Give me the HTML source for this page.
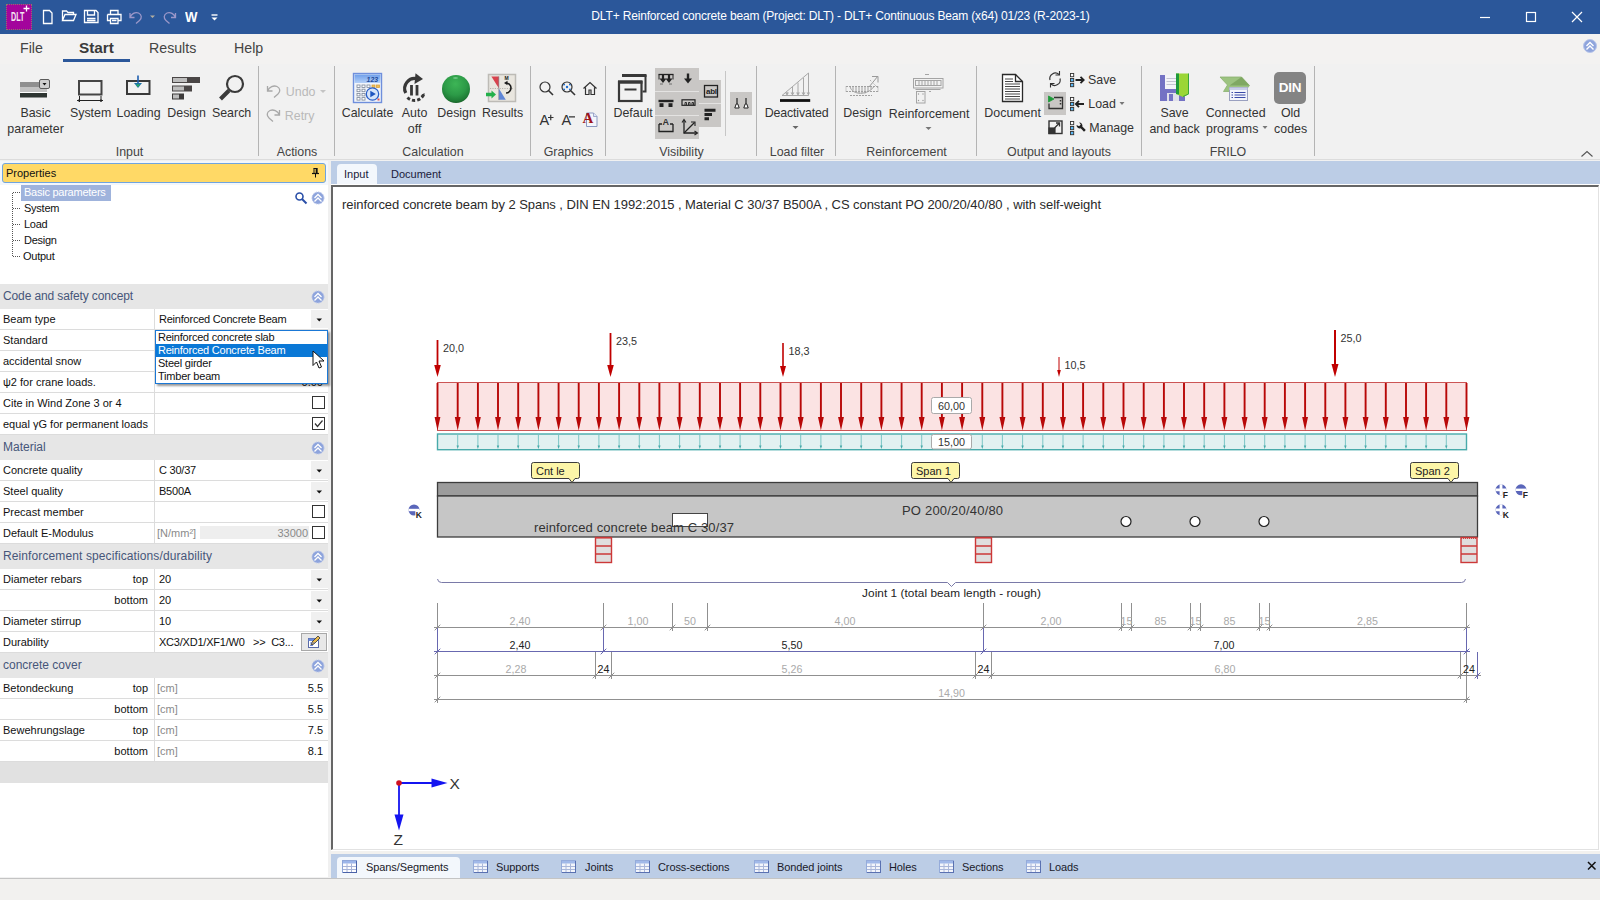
<!DOCTYPE html>
<html><head><meta charset="utf-8"><title>DLT+ Reinforced concrete beam</title>
<style>
*{box-sizing:border-box;margin:0;padding:0}
html,body{width:1600px;height:900px;overflow:hidden;background:#f1f1f1;font-family:"Liberation Sans",sans-serif;font-size:12px;color:#1a1a1a}
.abs{position:absolute}
#title{position:absolute;left:0;top:0;width:1600px;height:34px;background:#2b579a;color:#fff}
#title .cap{position:absolute;left:0;width:1681px;top:9px;text-align:center;font-size:12px;letter-spacing:-0.170px}
#menu{position:absolute;left:0;top:34px;width:1600px;height:30px;background:#f3f2f1}
#menu span{position:absolute;top:6px;font-size:14.200px;color:#444;white-space:nowrap}
#ribbon{position:absolute;left:0;top:64px;width:1600px;height:96px;background:#f1f1f1;border-bottom:1px solid #dcdcdc}
.rl{position:absolute;font-size:12.400px;color:#333;text-align:center;white-space:nowrap;line-height:16px;transform:translateX(calc(-50% + 0.6px))}
.gl{position:absolute;top:81px;font-size:12.400px;color:#444;white-space:nowrap;transform:translateX(-50%)}
.sep{position:absolute;top:2px;width:1px;height:90px;background:#b4b4b4}
.dis{color:#b9b9b9}
svg{position:absolute;overflow:visible}
</style></head><body>
<div id="title">
 <div class="abs" style="left:6px;top:4px;width:26px;height:26px;background:#a3059c;border:1px dotted #8a7a6a"></div>
 <div class="abs" style="left:10.800px;top:11.500px;font-size:9px;font-weight:bold;color:#f4e6f2;transform:scale(.8,1.45);transform-origin:0 50%">DLT</div>
 <svg width="10" height="10" style="left:22px;top:3px" stroke="#fff" stroke-width="1.300"><path d="M1.500 5.500h6M4.500 2.500v6"/></svg>
 <svg width="230" height="34" style="left:0;top:0" fill="none" stroke="#fff" stroke-width="1.3">
  <path d="M43.5 10.5h6l2.5 2.5v10.500h-8.500z"/>
  <path d="M62.500 20.500v-9.500h4l1.500 1.500h5.500v2.500M62.500 20.500l2.500-6h11l-2.500 6z"/>
  <path d="M84.500 10.500h11.500l2 2v10h-13.500zM87.500 10.500v4.500h7v-4.500M87 18.500h8.500M87 20.500h8.500"/>
  <path d="M110.500 14.500v-4h7.500v4M107.500 14.500h13.500v6h-2.500M110 20.500h-2.500v-6M110.500 18.500h7.500v5h-7.500zM112 20.500h4.500"/>
  <path d="M130 13v4.500h4.500M130 17.500c1.500-3.500 5-6 8.500-4.500c3.500 1.500 3.500 5.500 1 7.500l-3.500 3" stroke="#9b97c9"/>
  <path d="M175.500 13v4.500h-4.500M175.500 17.500c-1.500-3.500-5-6-8.500-4.500c-3.500 1.500-3.500 5.500-1 7.500l3.500 3" stroke="#9b97c9"/>
  <path d="M150 15.500h5l-2.500 2.500z" fill="#b5b0a0" stroke="none"/>
  <path d="M211.500 15h6" stroke-width="1.400"/><path d="M211.500 17.500h6l-3 3z" fill="#fff" stroke="none"/>
 </svg>
 <div class="abs" style="left:185px;top:8px;font-size:15px;font-weight:bold;color:#fff;transform:scaleX(.88);transform-origin:0 0">W</div>
 <div class="cap">DLT+ Reinforced concrete beam (Project: DLT) - DLT+ Continuous Beam (x64) 01/23 (R-2023-1)</div>
 <svg width="140" height="34" style="left:1460px;top:0" fill="none" stroke="#fff" stroke-width="1.200">
  <path d="M20 17.500h10"/><rect x="66.500" y="12.500" width="9" height="9"/><path d="M112 12l10 10M122 12l-10 10"/>
 </svg>
</div>

<div id="menu">
 <span style="left:20px">File</span>
 <span style="left:79px;font-weight:bold;color:#3a3a3a;font-size:15.300px;top:5px">Start</span>
 <span style="left:149px">Results</span>
 <span style="left:234px">Help</span>
 <div class="abs" style="left:63px;top:25px;width:67px;height:3px;background:#2b579a"></div>
 <svg width="16" height="16" style="left:1582px;top:4px"><circle cx="8" cy="8" r="6.500" fill="#8ea4dc" stroke="#b9c6ea" stroke-width="1"/><path d="M4.500 8l3.500-3.500l3.500 3.500M4.500 11.500l3.500-3.500l3.500 3.500" fill="none" stroke="#fff" stroke-width="1.400"/></svg>
</div>

<div id="ribbon">
<!-- separators -->
<div class="sep" style="left:258px"></div><div class="sep" style="left:334px"></div><div class="sep" style="left:530px"></div><div class="sep" style="left:605px"></div><div class="sep" style="left:756px"></div><div class="sep" style="left:835px"></div><div class="sep" style="left:976px"></div><div class="sep" style="left:1141px"></div><div class="sep" style="left:1314px"></div>
<!-- group labels -->
<div class="gl" style="left:129.500px">Input</div><div class="gl" style="left:297px">Actions</div><div class="gl" style="left:433px">Calculation</div><div class="gl" style="left:568.500px">Graphics</div><div class="gl" style="left:681.500px">Visibility</div><div class="gl" style="left:797px">Load filter</div><div class="gl" style="left:906.500px">Reinforcement</div><div class="gl" style="left:1059px">Output and layouts</div><div class="gl" style="left:1228px">FRILO</div>
<!-- big labels -->
<div class="rl" style="left:35px;top:41px">Basic<br>parameter</div>
<div class="rl" style="left:90px;top:41px">System</div>
<div class="rl" style="left:138px;top:41px">Loading</div>
<div class="rl" style="left:186px;top:41px">Design</div>
<div class="rl" style="left:231px;top:41px">Search</div>
<div class="rl dis" style="left:300px;top:20px">Undo</div>
<div class="rl dis" style="left:299px;top:44px">Retry</div>
<div class="rl" style="left:367px;top:41px">Calculate</div>
<div class="rl" style="left:414px;top:41px">Auto<br>off</div>
<div class="rl" style="left:456px;top:41px">Design</div>
<div class="rl" style="left:502px;top:41px">Results</div>
<div class="rl" style="left:632.500px;top:41px">Default</div>
<div class="rl" style="left:796px;top:41px;letter-spacing:-0.150px">Deactivated</div>
<div class="rl" style="left:862px;top:41px">Design</div>
<div class="rl" style="left:928.500px;top:42px">Reinforcement</div>
<div class="rl" style="left:1012px;top:41px">Document</div>
<div class="rl" style="left:1101.500px;top:8px">Save</div>
<div class="rl" style="left:1101.500px;top:32px">Load</div>
<div class="rl" style="left:1111px;top:56px">Manage</div>
<div class="rl" style="left:1174px;top:41px">Save<br>and back</div>
<div class="rl" style="left:1235px;top:41px">Connected<br>programs&nbsp;&nbsp;</div>
<div class="rl" style="left:1290px;top:41px">Old<br>codes</div>
<!-- Basic parameter -->
<svg width="34" height="22" style="left:18px;top:13px">
 <rect x="2" y="5" width="27" height="5" fill="#8f8f8f"/><rect x="2" y="10" width="27" height="5" fill="#c2c2c2"/><rect x="2" y="15" width="27" height="1" fill="#fff"/><rect x="2" y="16" width="27" height="4.500" fill="#2e3532"/>
 <rect x="21.500" y="2.500" width="10" height="9" rx="1.500" fill="#cfcfcf" stroke="#5a5a5a" stroke-width="1"/><path d="M24.500 6h4l-2 2.500z" fill="#111"/>
</svg>
<!-- System -->
<svg width="30" height="26" style="left:75px;top:14px" fill="none" stroke="#444">
 <rect x="4" y="3" width="22.500" height="13.500" stroke-width="2"/><path d="M2 22.500h26M4.500 18v6M26 18v6" stroke="#222" stroke-width="1"/><path d="M2 22.500l2.500-1.500v3zM28 22.500l-2.500-1.500v3z" fill="#222" stroke="none"/>
</svg>
<!-- Loading -->
<svg width="30" height="24" style="left:123px;top:10px" fill="none">
 <rect x="4" y="7" width="22.500" height="13" stroke="#3a3a3a" stroke-width="2"/><path d="M15 1.500v9" stroke="#1f5fb0" stroke-width="1.600"/><path d="M11 9h8l-4 5z" fill="#1c74a8"/><path d="M13 10.500h4l-2 2.500z" fill="#2fae5a"/>
</svg>
<!-- Design bars -->
<svg width="30" height="24" style="left:171px;top:12px">
 <rect x="1" y="1" width="28" height="6" fill="#4a4646"/><rect x="2" y="2" width="14" height="4" fill="#bdbdbd"/>
 <rect x="1" y="9.500" width="20" height="6" fill="#4a4646"/><rect x="2" y="10.500" width="11" height="4" fill="#bdbdbd"/>
 <rect x="1" y="17.500" width="12" height="6" fill="#3c3a3a"/><rect x="2" y="18.500" width="6" height="4" fill="#bdbdbd"/>
</svg>
<!-- Search -->
<svg width="30" height="28" style="left:217px;top:10px" fill="none" stroke="#3a3a3a">
 <circle cx="18" cy="10" r="8" stroke-width="2.200"/><path d="M12 16.500l-8.500 8.500" stroke-width="4"/>
</svg>
<!-- Undo / Retry -->
<svg width="70" height="46" style="left:262px;top:16px" fill="none" stroke="#a8a8a8" stroke-width="1.300">
 <path d="M5.500 6v5h5M5.500 11c2-4 6-6 9.500-4.500c3.500 1.500 3.500 5.500 1 7.500l-4 3.500"/>
 <path d="M17.500 30v5h-5M17.500 35c-2-4-6-6-9.500-4.500c-3.500 1.500-3.500 5.500-1 7.500l4 3.500"/>
 <path d="M58 10h6l-3 3z" fill="#c4c4c4" stroke="none"/>
</svg>
<!-- Calculate -->
<svg width="32" height="32" style="left:352px;top:8px">
 <defs><linearGradient id="cg" x1="0" y1="0" x2="0" y2="1"><stop offset="0" stop-color="#6f9fea"/><stop offset="1" stop-color="#b4d0f8"/></linearGradient></defs>
 <rect x="1.500" y="1.500" width="28" height="29" fill="#f2f5fb" stroke="#6f8fdc" stroke-width="1.400"/>
 <rect x="2.500" y="2.500" width="26" height="8.500" fill="url(#cg)"/>
 <text x="14.500" y="9.500" font-family="Liberation Sans,sans-serif" font-size="7" font-weight="bold" font-style="italic" fill="#1f4a9a">123</text>
 <g fill="#fff" stroke="#7a8698" stroke-width=".8"><rect x="5" y="13" width="3" height="2.500"/><rect x="10" y="13" width="3" height="2.500"/><rect x="15" y="13" width="3" height="2.500"/><rect x="20" y="13" width="3" height="2.500" fill="#f2c050" stroke="#d8a040"/><rect x="24.500" y="13" width="3" height="2.500" fill="#f2c050" stroke="#d8a040"/><rect x="5" y="17.200" width="3" height="2.500"/><rect x="10" y="17.200" width="3" height="2.500"/><rect x="5" y="21.400" width="3" height="2.500"/><rect x="10" y="21.400" width="3" height="2.500"/><rect x="5" y="25.600" width="3" height="2.500"/><rect x="10" y="25.600" width="3" height="2.500"/></g>
 <circle cx="20.500" cy="22" r="6.200" fill="#d6e4fa" stroke="#2a5fc8" stroke-width="1.300"/><path d="M18.300 18.800v6.400l5.500-3.200z" fill="#1f55c0"/><rect x="25.500" y="26.500" width="2" height="2" fill="#e05050"/>
</svg>
<!-- Auto off -->
<svg width="30" height="34" style="left:400px;top:8px" fill="none" stroke="#383838">
 <path d="M5.800 21a10 10 0 0 1 11.500-14.200" stroke-width="3.200"/><path d="M15.500 1.200l7.500 5.800l-8.500 5z" fill="#383838" stroke="none"/>
 <path d="M7.500 25.500a10 10 0 0 0 16.500-3.500" stroke-width="3" stroke-dasharray="3.200 2"/>
 <path d="M11.500 13v10.500M17 13v10.500" stroke-width="2.800"/><path d="M20.500 23.500l4-2.500v3z" fill="#383838" stroke="none"/>
</svg>
<!-- Design sphere -->
<svg width="32" height="32" style="left:440px;top:9px">
 <defs><radialGradient id="sg" cx=".48" cy=".32" r=".72"><stop offset="0" stop-color="#3db556"/><stop offset=".55" stop-color="#2c9a47"/><stop offset=".85" stop-color="#1e7a35"/><stop offset="1" stop-color="#14521f"/></radialGradient></defs>
 <circle cx="16" cy="16" r="14" fill="url(#sg)"/><ellipse cx="15.500" cy="5" rx="2.500" ry=".8" fill="#9fe0b0" opacity=".7"/>
</svg>
<!-- Results -->
<svg width="32" height="32" style="left:486px;top:8px">
 <rect x="2.500" y="2.500" width="27" height="27" fill="#e9e6df" stroke="#bdbbb6" stroke-width="1.500"/>
 <path d="M5.400 4.500h7.600v12.100z" fill="#d8434e"/><path d="M12.800 16.600v11.200h7z" fill="#5f86d6"/>
 <path d="M12.800 4.500v23.500" stroke="#8a8a90" stroke-width=".7"/>
 <path d="M4 16.500h24" stroke="#a8a6a0" stroke-width=".8" stroke-dasharray="1.200 1.200"/>
 <path d="M0 20.800h5.500v-2.300l4.500 4l-4.500 4v-2.300h-5.500z" fill="#22b04a"/>
 <path d="M20 11a5 5 0 1 1 0 10" fill="none" stroke="#1a1a1a" stroke-width="1.600"/><path d="M18 11l3.500-2.200v4.400z" fill="#1a1a1a"/>
 <text x="18.500" y="8.200" font-family="Liberation Sans,sans-serif" font-size="5" font-weight="bold" fill="#1a1a1a">M</text>
</svg>
<!-- Graphics -->
<svg width="70" height="60" style="left:536px;top:12px" fill="none" stroke="#333" stroke-width="1.200">
 <circle cx="9" cy="11" r="5"/><path d="M12.500 14.500l4.500 4.500" stroke-width="1.600"/>
 <circle cx="31" cy="11" r="5" stroke="#333"/><path d="M34.500 14.500l4.500 4.500" stroke-width="1.600"/>
 <path d="M29 8.500h-1v1M33 8.500h1v1M29 13.500h-1v-1M33 13.500h1v-1" stroke="#1f6fd0" stroke-width="1.200"/><circle cx="31" cy="11" r="1.200" fill="#1f6fd0" stroke="none"/>
 <path d="M47.500 12.500l6.500-6l6.500 6M49.500 11.500v7h3.500v-4.500h2v4.500h3.500v-7"/>
</svg>
<div class="abs" style="left:539.500px;top:48px;font-size:14.500px;color:#333;line-height:16px">A</div>
<div class="abs" style="left:561.500px;top:48px;font-size:14.500px;color:#333;line-height:16px">A</div>
<svg width="34" height="10" style="left:545px;top:48px" stroke="#333" stroke-width="1.200"><path d="M3 5.500h5.500M5.750 2.700v5.500M24 4.800h6"/></svg>
<svg width="16" height="18" style="left:584px;top:47px"><path d="M2.500 2h7l3.500 3.500v10h-10.500z" fill="#f4f6fb" stroke="#8a98c0" stroke-width="1"/><path d="M9.500 2v3.500h3.500" fill="#dfe5f4" stroke="#8a98c0" stroke-width=".8"/></svg>
<div class="abs" style="left:582.500px;top:46px;font-family:'Liberation Serif',serif;font-size:15px;font-weight:bold;color:#a01418">A</div>
<!-- Default -->
<svg width="34" height="32" style="left:616px;top:8px" fill="none" stroke="#383838">
 <path d="M7 4h22.500v15.500h-3" stroke-width="2"/><path d="M6 3.500h24.500" stroke-width="3"/>
 <rect x="3" y="10" width="22.500" height="19" stroke-width="2.200"/><path d="M2 10h24.500" stroke-width="3.400"/><path d="M8.500 17.500h12" stroke-width="2"/>
</svg>
<!-- Visibility bg -->
<div class="abs" style="left:655px;top:4px;width:44px;height:71px;background:#c9c7c5"></div>
<div class="abs" style="left:699px;top:16px;width:22px;height:47px;background:#c9c7c5"></div>
<div class="abs" style="left:730px;top:28px;width:22px;height:23px;background:#c9c7c5"></div>
<div class="abs" style="left:655px;top:27px;width:44px;height:1px;background:#e4e3e2"></div>
<div class="abs" style="left:655px;top:51px;width:44px;height:1px;background:#e4e3e2"></div>
<div class="abs" style="left:699px;top:39px;width:22px;height:1px;background:#e4e3e2"></div>
<div class="abs" style="left:725px;top:7px;width:1px;height:65px;background:#c6c6c6"></div>
<svg width="100" height="76" style="left:655px;top:4px" fill="none" stroke="#222" stroke-width="1.200">
 <!-- (666,78) -> local (11,10) : two arrows in frame -->
 <path d="M3.500 6.500h15" stroke-width="1.300"/><path d="M8 6v6M14 6v6" stroke-width="2.200"/><path d="M4.500 10.500h7l-3.500 4.500zM10.500 10.500h7l-3.500 4.500z" fill="#222" stroke="none"/><path d="M4 6.500v5M18 6.500v5" stroke-width="1"/><path d="M5 16h3M14 16h3" stroke-width=".8" stroke="#555"/>
 <!-- (688,78) -> (33,10) arrow down -->
 <path d="M33 5.500v6" stroke-width="2.400"/><path d="M29 10.500h8l-4 5z" fill="#222" stroke="none"/>
 <!-- (666,102) -> (11,34) -->
 <path d="M3.500 33h15" stroke-width="2.400"/><rect x="4.500" y="35.200" width="4" height="3.800" fill="#222" stroke="none"/><rect x="13.500" y="35.200" width="4" height="3.800" fill="#222" stroke="none"/>
 <!-- (688,102) -> (33,34) -->
 <rect x="27" y="31.800" width="13" height="5.500" stroke-width="1.200"/><path d="M30 37v-2.500h1.500v2.500M33.500 37v-2.500h1.500v2.500M37 37v-2.500h1.500v2.500" stroke-width=".9"/>
 <!-- (666,126) -> (11,58) -->
 <path d="M4 56v7.500h14v-7.500" stroke-width="1.300"/><path d="M4 56h3M15 56h3" stroke-width="1.300"/>
 <!-- (688,126) -> (33,58) -->
 <path d="M29 52v13h13" stroke-width="1.300"/><path d="M29 65l10.500-10.500" stroke-width="1.300"/><path d="M27 54.500l2-3l2 3M39.500 63l3 2l-3 2M36 54h4v4" stroke-width="1.100"/>
 <!-- (710,90) -> (55,22) abl -->
 <rect x="49.500" y="17.500" width="13" height="11.500" stroke-width="1.300"/>
 <!-- (710,114) -> (55,46) bars -->
 <path d="M49.500 42.200h11M49.500 46.500h7.500M49.500 50.700h4.500" stroke-width="2.900"/>
 <!-- (741,103) -> (86,35) -->
 <path d="M82 30v6M91 30v6" stroke-width="1.200"/><path d="M81.200 36l-1.400 4h4.400l-1.400-4zM90.200 36l-1.400 4h4.400l-1.400-4z" fill="#fff" stroke-width="1"/>
</svg>
<div class="abs" style="left:662.500px;top:53px;font-size:9px;font-weight:bold;color:#333">A</div>
<div class="abs" style="left:706px;top:22.500px;font-size:8px;font-weight:bold;color:#222;letter-spacing:-0.3px">abl</div>
<!-- Deactivated -->
<svg width="44" height="34" style="left:774px;top:7px" fill="none" stroke="#a8a8a8" stroke-width="1">
 <path d="M8 24.500l26.500-22.500v22.500z"/><path d="M13 21v3M18.500 16v8M24 11.500v12.500M29.500 7v17"/><path d="M11 21.500l2 3l2-3zM16.500 21.500l2 3l2-3zM22 21.500l2 3l2-3zM27.500 21.500l2 3l2-3zM32.500 21.500l2 3l1.500-3z" fill="#a8a8a8" stroke="none"/>
 <path d="M6 29.500h30.200" stroke="#111" stroke-width="2.800"/>
</svg>
<svg width="10" height="6" style="left:791px;top:61px"><path d="M1.500 1h6l-3 3z" fill="#666"/></svg>
<!-- Design (reinf) -->
<svg width="40" height="32" style="left:843px;top:6px" fill="none" stroke="#a0a0a0" stroke-width="1">
 <path d="M3 16.500h32M3 21.500h32M7 25.500h22" stroke-dasharray="2 1"/><path d="M7 16.500c2 9 18 9 24 0"/><path d="M10 16.500v4M13 16.500v6M16 16.500v7M19 16.500v7M22 16.500v7M25 16.500v5.500M28 16.500v3"/>
 <path d="M26 17l9-11M29 6.500h6M35 6.500v6" stroke="#999"/><path d="M27 10l8 8" stroke="#b0b0b0" stroke-dasharray="1.500 1"/><path d="M3 16.500v5M35 16.500v5" stroke-dasharray="1 1"/>
</svg>
<!-- Reinforcement -->
<svg width="40" height="36" style="left:909px;top:6px" fill="none" stroke="#a4a4a4" stroke-width="1">
 <path d="M16 4.500h4M6.500 19.500h25M20 21.500h2"/><rect x="4.500" y="8.500" width="29.500" height="9.500"/><rect x="6.500" y="10.500" width="25.500" height="5"/><path d="M10 10.500v5M13 10.500v5M16 10.500v5M19 10.500v5M22 10.500v5M25 10.500v5M28 10.500v5"/>
 <rect x="7.500" y="21.500" width="8.500" height="11.500"/><circle cx="9.500" cy="24" r=".7" fill="#999" stroke="none"/><circle cx="14" cy="24" r=".7" fill="#999" stroke="none"/><circle cx="9.500" cy="30.500" r=".7" fill="#999" stroke="none"/><circle cx="14" cy="30.500" r=".7" fill="#999" stroke="none"/>
</svg>
<svg width="10" height="6" style="left:923.500px;top:62px"><path d="M1.500 1h6l-3 3z" fill="#777"/></svg>
<!-- Document -->
<svg width="26" height="32" style="left:999px;top:8px" fill="#fff" stroke="#2a2a2a" stroke-width="1.300">
 <path d="M3.500 2.500h13l7 7v20h-20z"/><path d="M16.500 2.500v7h7" fill="none"/><path d="M6 7h8M6 9.500h8M6 12h15M6 14.500h15M6 17h15M6 19.500h15M6 22h15M6 24.500h15M6 27h15" stroke-width=".9" stroke="#333"/>
</svg>
<!-- small col -->
<div class="abs" style="left:1044px;top:28px;width:22px;height:23px;background:#c9c7c5"></div>
<svg width="24" height="70" style="left:1044px;top:4px" fill="none" stroke="#333" stroke-width="1.200">
 <path d="M6 12a5.500 5.500 0 0 1 9-5.500M16 10.500a5.500 5.500 0 0 1 -9 5.500"/><path d="M15.500 3v4h-4M6.500 19.500v-4h4" stroke-width="1.100"/>
 <path d="M4.500 28v6l5.500-3z" fill="#1f9a3a" stroke="#1f9a3a" stroke-width=".8"/><path d="M10 29.500h8.500v11h-13.500v-5" stroke-width="1.300"/><path d="M16.500 32v6" stroke-dasharray="1.500 1.500" stroke-width="1.500"/>
 <rect x="5" y="53" width="13" height="12.500" stroke-width="1.400"/><rect x="5" y="60" width="6" height="5.500" fill="#333"/><path d="M10.500 60l5-5M12 55h3.500v3.500" stroke-width="1.300"/>
</svg>
<!-- Save/Load/Manage icons -->
<svg width="20" height="70" style="left:1069px;top:3.500px" fill="none" stroke="#222" stroke-width="1.300">
 <g stroke="#333" stroke-width=".9" fill="#5bb8f5"><rect x="1.500" y="5.500" width="3.200" height="3.200" fill="#fff"/><rect x="1.500" y="10.500" width="3.200" height="3.200"/><rect x="1.500" y="15.500" width="3.200" height="3.200"/><rect x="1.500" y="29.500" width="3.200" height="3.200" fill="#fff"/><rect x="1.500" y="34.500" width="3.200" height="3.200"/><rect x="1.500" y="39.500" width="3.200" height="3.200"/><rect x="1.500" y="53.500" width="3.200" height="3.200" fill="#fff"/><rect x="1.500" y="58.500" width="3.200" height="3.200"/><rect x="1.500" y="63.500" width="3.200" height="3.200"/></g>
 <path d="M6.500 12h8M11.500 8.800l3.200 3.200l-3.200 3.200" stroke-width="1.800"/>
 <path d="M15 36h-8M10 32.800l-3.200 3.200l3.200 3.200" stroke-width="1.800"/>
 <path d="M7.500 57a3.200 3.200 0 0 0 4.200 3.200l3.300 3.500l1.800-1.800l-3.500-3.300a3.200 3.200 0 0 0 -3.200-4.200l1.700 2.100l-1.700 1.700z" fill="#222" stroke="none"/>
</svg>
<svg width="10" height="6" style="left:1118px;top:37px"><path d="M1.500 1h5l-2.500 3z" fill="#777"/></svg>
<svg width="10" height="6" style="left:1260.500px;top:60.500px"><path d="M1.500 1h5l-2.500 3z" fill="#777"/></svg>
<!-- Save and back -->
<svg width="34" height="32" style="left:1158px;top:8px">
 <path d="M2 3h22l3 3v23h-25z" fill="#7472c4"/><rect x="7" y="3" width="14" height="14" fill="#f4f4f8"/><path d="M8.500 6.500h11M8.500 9.500h11M8.500 12.500h11" stroke="#b8b8c8" stroke-width=".8"/><rect x="9" y="21" width="12" height="8" fill="#e0e0ea"/><rect x="11" y="22" width="4" height="7" fill="#7472c4"/>
 <path d="M18 1.500h12.500v21l-5.500 2.500l-7-3z" fill="#9bd636"/><path d="M18 1.500h3v21l-3-.5z" fill="#1f9a3a"/><path d="M25 24.500l5.500-2.500v-20.500" fill="none" stroke="#3aa83a" stroke-width="1"/>
</svg>
<!-- Connected programs -->
<svg width="34" height="32" style="left:1219px;top:8px">
 <path d="M1 5h21.500l8 8.500l-5 6h-21l4-6.500z" fill="#9cc380" stroke="#8ab070" stroke-width=".8"/><path d="M22.500 5l8 8.500h-20z" fill="#7fa862"/>
 <rect x="10.500" y="15.500" width="18" height="13" fill="#f2f4fb" stroke="#9aa0c0" stroke-width="1"/><rect x="10.500" y="15.500" width="18" height="2.500" fill="#c9cfe8"/>
 <path d="M15.500 20.500h11M15.500 23h11M15.500 25.500h11" stroke="#3a4aa8" stroke-width="1"/><path d="M12.500 20.500h1.500M12.500 23h1.500M12.500 25.500h1.500" stroke="#3a4aa8" stroke-width="1"/>
</svg>
<!-- Old codes -->
<div class="abs" style="left:1274px;top:8px;width:32px;height:32px;border-radius:5px;background:#848484"></div>
<div class="abs" style="left:1274px;top:16px;width:32px;text-align:center;font-size:13.500px;font-weight:bold;color:#fff;letter-spacing:-0.2px">DIN</div>
<!-- collapse -->
<svg width="14" height="8" style="left:1580px;top:86px" fill="none" stroke="#555" stroke-width="1.100"><path d="M1.500 6.500l5.500-5l5.500 5"/></svg>

</div>

<div class="abs" style="left:0;top:161px;width:331px;height:716px;background:#fff"></div>

<div class="abs" style="left:0;top:161px;width:328px;height:24px;background:#f3f7fc"></div>
<div class="abs" style="left:328px;top:161px;width:3px;height:716px;background:#f0f0f0"></div>
<div class="abs" style="left:331px;top:161px;width:1269px;height:23px;background:#bccde6"></div>
<div class="abs" style="left:2px;top:163px;width:324px;height:20px;background:#ffd966;border:1px solid #6fa4e0;border-radius:3px"></div>
<div class="abs" style="left:6px;top:167px;font-size:11px;color:#111">Properties</div>
<svg width="10" height="12" style="left:311px;top:167px" fill="none" stroke="#111"><path d="M2.500 1.500h4M3 1.500v4.500M6 1.500v4.500" stroke-width="1"/><path d="M5.500 1.500v4.500" stroke-width="1.600"/><path d="M1 6.500h7" stroke-width="1.200"/><path d="M4.500 6.500v4" stroke-width="1"/></svg>
<!-- tabs -->
<div class="abs" style="left:337px;top:164px;width:40px;height:21px;background:#f3f7fc;border-radius:4px 4px 0 0"></div>
<div class="abs" style="left:344px;top:168px;font-size:11px;color:#1a1a3a">Input</div>
<div class="abs" style="left:391px;top:168px;font-size:11px;color:#1a1a3a">Document</div>

<div id="left" class="abs" style="left:0;top:0;width:331px;height:900px;font-size:11px;color:#111">
<div class="abs" style="left:21px;top:185px;width:90px;height:16px;background:#9fb3dc"></div>
<svg width="30" height="80" style="left:0;top:185px" fill="none" stroke="#555" stroke-width="1" stroke-dasharray="1 1"><path d="M12.500 8v64M13 7.500h8M13 23.500h8M13 39.500h8M13 55.500h8M13 71.500h8"/></svg>
<div class="abs" style="left:24px;top:186px;color:#fff;letter-spacing:-0.250px">Basic parameters</div>
<div class="abs" style="left:24px;top:202px;color:#111;letter-spacing:-0.250px">System</div>
<div class="abs" style="left:24px;top:218px;color:#111;letter-spacing:-0.250px">Load</div>
<div class="abs" style="left:24px;top:234px;color:#111;letter-spacing:-0.250px">Design</div>
<div class="abs" style="left:23px;top:250px;color:#111;letter-spacing:-0.250px">Output</div>
<svg width="14" height="14" style="left:293.500px;top:191px" fill="none" stroke="#2a4fa8"><circle cx="5.500" cy="5.500" r="3.500" stroke-width="1.600"/><path d="M8 8l4.500 4.500" stroke-width="2"/></svg>
<svg width="14" height="14" style="left:310.5px;top:190.5px"><circle cx="7" cy="7" r="6" fill="#8ea4dc" stroke="#b4c2ea" stroke-width="1" stroke-dasharray="1.500 1"/><path d="M3.500 7l3.500-3.500l3.500 3.500M3.500 10.500l3.500-3.500l3.500 3.500" fill="none" stroke="#fff" stroke-width="1.300"/></svg>
<div class="abs" style="left:0;top:284px;width:328px;height:25px;background:#e6e6e6"></div>
<div class="abs" style="left:3px;top:289px;font-size:12px;color:#46567a;letter-spacing:-0.12px;white-space:nowrap">Code and safety concept</div>
<svg width="14" height="14" style="left:311px;top:289.5px"><circle cx="7" cy="7" r="6" fill="#8ea4dc" stroke="#b4c2ea" stroke-width="1" stroke-dasharray="1.500 1"/><path d="M3.500 7l3.500-3.500l3.500 3.500M3.500 10.500l3.500-3.500l3.500 3.500" fill="none" stroke="#fff" stroke-width="1.300"/></svg>
<div class="abs" style="left:0;top:329px;width:328px;height:1px;background:#dcdcdc"></div>
<div class="abs" style="left:3px;top:313px;white-space:nowrap">Beam type</div>
<div class="abs" style="left:159px;top:313px;white-space:nowrap;letter-spacing:-0.220px">Reinforced Concrete Beam</div>
<div class="abs" style="left:311px;top:310px;width:17px;height:18px;background:#f0f0f0"></div><svg width="8" height="5" style="left:316px;top:318px"><path d="M.5 .5h5.500l-2.750 3z" fill="#111"/></svg>
<div class="abs" style="left:0;top:350px;width:328px;height:1px;background:#dcdcdc"></div>
<div class="abs" style="left:3px;top:334px;white-space:nowrap">Standard</div>
<div class="abs" style="left:0;top:371px;width:328px;height:1px;background:#dcdcdc"></div>
<div class="abs" style="left:3px;top:355px;white-space:nowrap">accidental snow</div>
<div class="abs" style="left:0;top:392px;width:328px;height:1px;background:#dcdcdc"></div>
<div class="abs" style="left:3px;top:376px;white-space:nowrap">ψ2 for crane loads.</div>
<div class="abs" style="left:200px;width:123px;text-align:right;top:376px">0.00</div>
<div class="abs" style="left:0;top:413px;width:328px;height:1px;background:#dcdcdc"></div>
<div class="abs" style="left:3px;top:397px;white-space:nowrap">Cite in Wind Zone 3 or 4</div>
<div class="abs" style="left:312px;top:396px;width:13px;height:13px;border:1px solid #333;background:#fff"></div>
<div class="abs" style="left:0;top:434px;width:328px;height:1px;background:#dcdcdc"></div>
<div class="abs" style="left:3px;top:418px;white-space:nowrap">equal γG for permanent loads</div>
<div class="abs" style="left:312px;top:417px;width:13px;height:13px;border:1px solid #333;background:#fff"></div><svg width="13" height="13" style="left:312px;top:417px" fill="none" stroke="#333" stroke-width="1.200"><path d="M3 6.500l2.500 3l5-6"/></svg>
<div class="abs" style="left:0;top:435px;width:328px;height:25px;background:#e6e6e6"></div>
<div class="abs" style="left:3px;top:440px;font-size:12px;color:#46567a;letter-spacing:0px;white-space:nowrap">Material</div>
<svg width="14" height="14" style="left:311px;top:440.5px"><circle cx="7" cy="7" r="6" fill="#8ea4dc" stroke="#b4c2ea" stroke-width="1" stroke-dasharray="1.500 1"/><path d="M3.500 7l3.500-3.500l3.500 3.500M3.500 10.500l3.500-3.500l3.500 3.500" fill="none" stroke="#fff" stroke-width="1.300"/></svg>
<div class="abs" style="left:0;top:480px;width:328px;height:1px;background:#dcdcdc"></div>
<div class="abs" style="left:3px;top:464px;white-space:nowrap">Concrete quality</div>
<div class="abs" style="left:159px;top:464px;white-space:nowrap;letter-spacing:-0.220px">C 30/37</div>
<div class="abs" style="left:311px;top:461px;width:17px;height:18px;background:#f0f0f0"></div><svg width="8" height="5" style="left:316px;top:469px"><path d="M.5 .5h5.500l-2.750 3z" fill="#111"/></svg>
<div class="abs" style="left:0;top:501px;width:328px;height:1px;background:#dcdcdc"></div>
<div class="abs" style="left:3px;top:485px;white-space:nowrap">Steel quality</div>
<div class="abs" style="left:159px;top:485px;white-space:nowrap;letter-spacing:-0.220px">B500A</div>
<div class="abs" style="left:311px;top:482px;width:17px;height:18px;background:#f0f0f0"></div><svg width="8" height="5" style="left:316px;top:490px"><path d="M.5 .5h5.500l-2.750 3z" fill="#111"/></svg>
<div class="abs" style="left:0;top:522px;width:328px;height:1px;background:#dcdcdc"></div>
<div class="abs" style="left:3px;top:506px;white-space:nowrap">Precast member</div>
<div class="abs" style="left:312px;top:505px;width:13px;height:13px;border:1px solid #333;background:#fff"></div>
<div class="abs" style="left:0;top:543px;width:328px;height:1px;background:#dcdcdc"></div>
<div class="abs" style="left:3px;top:527px;white-space:nowrap">Default E-Modulus</div>
<div class="abs" style="left:157px;top:527px;color:#8a8a8a">[N/mm²]</div>
<div class="abs" style="left:312px;top:526px;width:13px;height:13px;border:1px solid #333;background:#fff"></div>
<div class="abs" style="left:0;top:544px;width:328px;height:25px;background:#e6e6e6"></div>
<div class="abs" style="left:3px;top:549px;font-size:12px;color:#46567a;letter-spacing:0.11px;white-space:nowrap">Reinforcement specifications/durability</div>
<svg width="14" height="14" style="left:311px;top:549.5px"><circle cx="7" cy="7" r="6" fill="#8ea4dc" stroke="#b4c2ea" stroke-width="1" stroke-dasharray="1.500 1"/><path d="M3.500 7l3.500-3.500l3.500 3.500M3.500 10.500l3.500-3.500l3.500 3.500" fill="none" stroke="#fff" stroke-width="1.300"/></svg>
<div class="abs" style="left:0;top:589px;width:328px;height:1px;background:#dcdcdc"></div>
<div class="abs" style="left:3px;top:573px;white-space:nowrap">Diameter rebars</div>
<div class="abs" style="left:90px;width:58px;text-align:right;top:573px">top</div>
<div class="abs" style="left:159px;top:573px;white-space:nowrap;letter-spacing:-0.220px">20</div>
<div class="abs" style="left:311px;top:570px;width:17px;height:18px;background:#f0f0f0"></div><svg width="8" height="5" style="left:316px;top:578px"><path d="M.5 .5h5.500l-2.750 3z" fill="#111"/></svg>
<div class="abs" style="left:0;top:610px;width:328px;height:1px;background:#dcdcdc"></div>
<div class="abs" style="left:90px;width:58px;text-align:right;top:594px">bottom</div>
<div class="abs" style="left:159px;top:594px;white-space:nowrap;letter-spacing:-0.220px">20</div>
<div class="abs" style="left:311px;top:591px;width:17px;height:18px;background:#f0f0f0"></div><svg width="8" height="5" style="left:316px;top:599px"><path d="M.5 .5h5.500l-2.750 3z" fill="#111"/></svg>
<div class="abs" style="left:0;top:631px;width:328px;height:1px;background:#dcdcdc"></div>
<div class="abs" style="left:3px;top:615px;white-space:nowrap">Diameter stirrup</div>
<div class="abs" style="left:159px;top:615px;white-space:nowrap;letter-spacing:-0.220px">10</div>
<div class="abs" style="left:311px;top:612px;width:17px;height:18px;background:#f0f0f0"></div><svg width="8" height="5" style="left:316px;top:620px"><path d="M.5 .5h5.500l-2.750 3z" fill="#111"/></svg>
<div class="abs" style="left:0;top:652px;width:328px;height:1px;background:#dcdcdc"></div>
<div class="abs" style="left:3px;top:636px;white-space:nowrap">Durability</div>
<div class="abs" style="left:159px;top:636px;white-space:nowrap;letter-spacing:-0.220px">XC3/XD1/XF1/W0&nbsp;&nbsp;&nbsp;&gt;&gt;&nbsp;&nbsp;C3...</div>
<div class="abs" style="left:0;top:653px;width:328px;height:25px;background:#e6e6e6"></div>
<div class="abs" style="left:3px;top:658px;font-size:12px;color:#46567a;letter-spacing:0px;white-space:nowrap">concrete cover</div>
<svg width="14" height="14" style="left:311px;top:658.5px"><circle cx="7" cy="7" r="6" fill="#8ea4dc" stroke="#b4c2ea" stroke-width="1" stroke-dasharray="1.500 1"/><path d="M3.500 7l3.500-3.500l3.500 3.500M3.500 10.500l3.500-3.500l3.500 3.500" fill="none" stroke="#fff" stroke-width="1.300"/></svg>
<div class="abs" style="left:0;top:698px;width:328px;height:1px;background:#dcdcdc"></div>
<div class="abs" style="left:3px;top:682px;white-space:nowrap">Betondeckung</div>
<div class="abs" style="left:90px;width:58px;text-align:right;top:682px">top</div>
<div class="abs" style="left:157px;top:682px;color:#8a8a8a">[cm]</div>
<div class="abs" style="left:200px;width:123px;text-align:right;top:682px">5.5</div>
<div class="abs" style="left:0;top:719px;width:328px;height:1px;background:#dcdcdc"></div>
<div class="abs" style="left:90px;width:58px;text-align:right;top:703px">bottom</div>
<div class="abs" style="left:157px;top:703px;color:#8a8a8a">[cm]</div>
<div class="abs" style="left:200px;width:123px;text-align:right;top:703px">5.5</div>
<div class="abs" style="left:0;top:740px;width:328px;height:1px;background:#dcdcdc"></div>
<div class="abs" style="left:3px;top:724px;white-space:nowrap">Bewehrungslage</div>
<div class="abs" style="left:90px;width:58px;text-align:right;top:724px">top</div>
<div class="abs" style="left:157px;top:724px;color:#8a8a8a">[cm]</div>
<div class="abs" style="left:200px;width:123px;text-align:right;top:724px">7.5</div>
<div class="abs" style="left:0;top:761px;width:328px;height:1px;background:#dcdcdc"></div>
<div class="abs" style="left:90px;width:58px;text-align:right;top:745px">bottom</div>
<div class="abs" style="left:157px;top:745px;color:#8a8a8a">[cm]</div>
<div class="abs" style="left:200px;width:123px;text-align:right;top:745px">8.1</div>
<div class="abs" style="left:0;top:762px;width:328px;height:21px;background:#e1e1e1"></div>
<div class="abs" style="left:154px;top:309px;width:1px;height:126px;background:#dcdcdc"></div>
<div class="abs" style="left:154px;top:460px;width:1px;height:84px;background:#dcdcdc"></div>
<div class="abs" style="left:154px;top:569px;width:1px;height:84px;background:#dcdcdc"></div>
<div class="abs" style="left:154px;top:678px;width:1px;height:84px;background:#dcdcdc"></div>
<div class="abs" style="left:200px;top:526px;width:109px;height:13px;background:#eeeeee"></div>
<div class="abs" style="left:200px;top:527px;width:108px;text-align:right;color:#8a8a8a">33000</div>
<div class="abs" style="left:301px;top:633px;width:26px;height:18px;background:#e8e8e8;border:1px solid #a8a8a8"></div>
<svg width="14" height="14" style="left:307px;top:635px" fill="none"><rect x="1.500" y="3.500" width="10" height="9" fill="#fff" stroke="#5a6aa8" stroke-width="1"/><rect x="1.500" y="3.500" width="10" height="2.500" fill="#6a8ad8"/><path d="M4 10l1-3l6-6l2 2l-6 6z" fill="#e8b84a" stroke="#333" stroke-width=".8"/><path d="M3 8h5M3 10.500h3" stroke="#4a6ad0" stroke-width=".8"/></svg>
<div class="abs" style="left:155px;top:330px;width:173px;height:54px;background:#fff;border:1px solid #1a78d6;box-shadow:2px 2px 2px rgba(0,0,0,.4)"></div>
<div class="abs" style="left:156px;top:344px;width:171px;height:13px;background:#0a78d6"></div>
<div class="abs" style="left:158px;top:331px;color:#111;white-space:nowrap;letter-spacing:-0.220px">Reinforced concrete slab</div>
<div class="abs" style="left:158px;top:344px;color:#fff;white-space:nowrap;letter-spacing:-0.220px">Reinforced Concrete Beam</div>
<div class="abs" style="left:158px;top:357px;color:#111;white-space:nowrap;letter-spacing:-0.220px">Steel girder</div>
<div class="abs" style="left:158px;top:370px;color:#111;white-space:nowrap;letter-spacing:-0.220px">Timber beam</div>
<svg width="14" height="20" style="left:312px;top:350px"><path d="M1 1v14.500l3.500-3.500l2.500 6l2.500-1l-2.500-6h5z" fill="#fff" stroke="#111" stroke-width="1"/></svg>
</div>
<div class="abs" style="left:331px;top:184px;width:1269px;height:670px;background:#fff"></div>
<div class="abs" style="left:331px;top:185px;width:1268px;height:665px;background:#fff;border-top:2px solid #666;border-left:2px solid #666;border-right:1px solid #e2e2e2;border-bottom:1px solid #e2e2e2"></div>
<div class="abs" style="left:331px;top:851px;width:1269px;height:3px;background:#f2f1ef"></div>
<div class="abs" style="left:342px;top:197px;font-size:13px;color:#2a2a2a;white-space:nowrap;letter-spacing:-0.066px">reinforced concrete beam by 2 Spans , DIN EN 1992:2015 , Material C 30/37 B500A , CS constant PO 200/20/40/80 , with self-weight</div>
<svg width="1600" height="900" style="left:0;top:0;pointer-events:none" font-family="Liberation Sans,sans-serif">
<rect x="437.5" y="382.500" width="1029" height="48" fill="#fbe3e3" stroke="#cc5555" stroke-width="1"/>
<path d="M437.5 383v36M457.7 383v36M477.9 383v36M498.0 383v36M518.2 383v36M538.4 383v36M558.6 383v36M578.7 383v36M598.9 383v36M619.1 383v36M639.3 383v36M659.4 383v36M679.6 383v36M699.8 383v36M720.0 383v36M740.1 383v36M760.3 383v36M780.5 383v36M800.7 383v36M820.9 383v36M841.0 383v36M861.2 383v36M881.4 383v36M901.6 383v36M921.7 383v36M941.9 383v36M962.1 383v36M982.3 383v36M1002.4 383v36M1022.6 383v36M1042.8 383v36M1063.0 383v36M1083.1 383v36M1103.3 383v36M1123.5 383v36M1143.7 383v36M1163.9 383v36M1184.0 383v36M1204.2 383v36M1224.4 383v36M1244.6 383v36M1264.7 383v36M1284.9 383v36M1305.1 383v36M1325.3 383v36M1345.4 383v36M1365.6 383v36M1385.8 383v36M1406.0 383v36M1426.1 383v36M1446.3 383v36M1466.5 383v36" stroke="#b80808" stroke-width="1.900" fill="none"/>
<path d="M437.5 430.500l-2.900-13.500h5.800zM457.7 430.500l-2.900-13.500h5.800zM477.9 430.500l-2.900-13.500h5.800zM498.0 430.500l-2.900-13.500h5.800zM518.2 430.500l-2.900-13.500h5.800zM538.4 430.500l-2.900-13.500h5.800zM558.6 430.500l-2.900-13.500h5.800zM578.7 430.500l-2.900-13.500h5.800zM598.9 430.500l-2.900-13.500h5.800zM619.1 430.500l-2.900-13.500h5.800zM639.3 430.500l-2.900-13.500h5.800zM659.4 430.500l-2.900-13.500h5.800zM679.6 430.500l-2.900-13.500h5.800zM699.8 430.500l-2.900-13.500h5.800zM720.0 430.500l-2.900-13.500h5.800zM740.1 430.500l-2.900-13.500h5.800zM760.3 430.500l-2.900-13.500h5.800zM780.5 430.500l-2.900-13.500h5.800zM800.7 430.500l-2.900-13.500h5.800zM820.9 430.500l-2.900-13.500h5.800zM841.0 430.500l-2.900-13.500h5.800zM861.2 430.500l-2.900-13.500h5.800zM881.4 430.500l-2.900-13.500h5.800zM901.6 430.500l-2.900-13.500h5.800zM921.7 430.500l-2.900-13.500h5.800zM941.9 430.500l-2.900-13.500h5.800zM962.1 430.500l-2.900-13.500h5.800zM982.3 430.500l-2.900-13.500h5.800zM1002.4 430.500l-2.900-13.500h5.800zM1022.6 430.500l-2.900-13.500h5.800zM1042.8 430.500l-2.900-13.500h5.800zM1063.0 430.500l-2.900-13.500h5.800zM1083.1 430.500l-2.900-13.500h5.800zM1103.3 430.500l-2.900-13.500h5.800zM1123.5 430.500l-2.900-13.500h5.800zM1143.7 430.500l-2.900-13.500h5.800zM1163.9 430.500l-2.900-13.500h5.800zM1184.0 430.500l-2.900-13.500h5.800zM1204.2 430.500l-2.900-13.500h5.800zM1224.4 430.500l-2.900-13.500h5.800zM1244.6 430.500l-2.900-13.500h5.800zM1264.7 430.500l-2.900-13.500h5.800zM1284.9 430.500l-2.900-13.500h5.800zM1305.1 430.500l-2.900-13.500h5.800zM1325.3 430.500l-2.900-13.500h5.800zM1345.4 430.500l-2.900-13.500h5.800zM1365.6 430.500l-2.900-13.500h5.800zM1385.8 430.500l-2.900-13.500h5.800zM1406.0 430.500l-2.900-13.500h5.800zM1426.1 430.500l-2.900-13.500h5.800zM1446.3 430.500l-2.900-13.500h5.800zM1466.5 430.500l-2.900-13.500h5.800z" fill="#b80808"/>
<rect x="437.5" y="434" width="1029" height="15.700" fill="#e2f1f1" stroke="#48aaaa" stroke-width="1.400"/>
<path d="M457.7 435v12M477.9 435v12M498.0 435v12M518.2 435v12M538.4 435v12M558.6 435v12M578.7 435v12M598.9 435v12M619.1 435v12M639.3 435v12M659.4 435v12M679.6 435v12M699.8 435v12M720.0 435v12M740.1 435v12M760.3 435v12M780.5 435v12M800.7 435v12M820.9 435v12M841.0 435v12M861.2 435v12M881.4 435v12M901.6 435v12M921.7 435v12M941.9 435v12M962.1 435v12M982.3 435v12M1002.4 435v12M1022.6 435v12M1042.8 435v12M1063.0 435v12M1083.1 435v12M1103.3 435v12M1123.5 435v12M1143.7 435v12M1163.9 435v12M1184.0 435v12M1204.2 435v12M1224.4 435v12M1244.6 435v12M1264.7 435v12M1284.9 435v12M1305.1 435v12M1325.3 435v12M1345.4 435v12M1365.6 435v12M1385.8 435v12M1406.0 435v12M1426.1 435v12M1446.3 435v12" stroke="#7cc6c6" stroke-width="1" fill="none"/>
<path d="M457.7 449l-1.200-3.500h2.400zM477.9 449l-1.200-3.500h2.400zM498.0 449l-1.200-3.500h2.400zM518.2 449l-1.200-3.500h2.400zM538.4 449l-1.200-3.500h2.400zM558.6 449l-1.200-3.500h2.400zM578.7 449l-1.200-3.500h2.400zM598.9 449l-1.200-3.500h2.400zM619.1 449l-1.200-3.500h2.400zM639.3 449l-1.200-3.500h2.400zM659.4 449l-1.200-3.500h2.400zM679.6 449l-1.200-3.500h2.400zM699.8 449l-1.200-3.500h2.400zM720.0 449l-1.200-3.500h2.400zM740.1 449l-1.200-3.500h2.400zM760.3 449l-1.200-3.500h2.400zM780.5 449l-1.200-3.500h2.400zM800.7 449l-1.200-3.500h2.400zM820.9 449l-1.200-3.500h2.400zM841.0 449l-1.200-3.500h2.400zM861.2 449l-1.200-3.500h2.400zM881.4 449l-1.200-3.500h2.400zM901.6 449l-1.200-3.500h2.400zM921.7 449l-1.200-3.500h2.400zM941.9 449l-1.200-3.500h2.400zM962.1 449l-1.200-3.500h2.400zM982.3 449l-1.200-3.500h2.400zM1002.4 449l-1.200-3.500h2.400zM1022.6 449l-1.200-3.500h2.400zM1042.8 449l-1.200-3.500h2.400zM1063.0 449l-1.200-3.500h2.400zM1083.1 449l-1.200-3.500h2.400zM1103.3 449l-1.200-3.500h2.400zM1123.5 449l-1.200-3.500h2.400zM1143.7 449l-1.200-3.500h2.400zM1163.9 449l-1.200-3.500h2.400zM1184.0 449l-1.200-3.500h2.400zM1204.2 449l-1.200-3.500h2.400zM1224.4 449l-1.200-3.500h2.400zM1244.6 449l-1.200-3.500h2.400zM1264.7 449l-1.200-3.500h2.400zM1284.9 449l-1.200-3.500h2.400zM1305.1 449l-1.200-3.500h2.400zM1325.3 449l-1.200-3.500h2.400zM1345.4 449l-1.200-3.500h2.400zM1365.6 449l-1.200-3.500h2.400zM1385.8 449l-1.200-3.500h2.400zM1406.0 449l-1.200-3.500h2.400zM1426.1 449l-1.200-3.500h2.400zM1446.3 449l-1.200-3.500h2.400z" fill="#48aaaa"/>
<rect x="931.500" y="397.500" width="40" height="16" rx="2" fill="#fff" stroke="#aaa"/><text x="951.500" y="409.500" font-size="10.800" text-anchor="middle" fill="#333">60,00</text>
<rect x="931.500" y="434.500" width="40" height="14.500" rx="2" fill="#fff" stroke="#aaa"/><text x="951.500" y="445.500" font-size="10.800" text-anchor="middle" fill="#333">15,00</text>
<path d="M437.5 340V366" stroke="#c00000" stroke-width="1.8"/>
<path d="M437.5 377l-3.3-12h6.6z" fill="#c00000"/>
<text x="443" y="352" font-size="10.800" fill="#333">20,0</text>
<path d="M610.5 333V366" stroke="#c00000" stroke-width="1.8"/>
<path d="M610.5 377l-3.3-12h6.6z" fill="#c00000"/>
<text x="616" y="345" font-size="10.800" fill="#333">23,5</text>
<path d="M783 343V367" stroke="#c00000" stroke-width="1.6"/>
<path d="M783 377l-3-11h6z" fill="#c00000"/>
<text x="788.5" y="355" font-size="10.800" fill="#333">18,3</text>
<path d="M1059 357V371" stroke="#c00000" stroke-width="1"/>
<path d="M1059 377l-1.8-7h3.6z" fill="#c00000"/>
<text x="1064.5" y="369" font-size="10.800" fill="#333">10,5</text>
<path d="M1335 330V365" stroke="#c00000" stroke-width="2"/>
<path d="M1335 377l-3.5-13h7z" fill="#c00000"/>
<text x="1340.5" y="342" font-size="10.800" fill="#333">25,0</text>
<rect x="437.500" y="482.500" width="1040" height="13.500" fill="#9c9c9c" stroke="#3c3c3c" stroke-width="1.300"/>
<rect x="437.500" y="496" width="1040" height="41" fill="#c6c6c6" stroke="#3c3c3c" stroke-width="1.300"/>
<rect x="672.500" y="513.500" width="35" height="13" fill="#fff" stroke="#444"/>
<circle cx="1126" cy="521.500" r="5" fill="#fff" stroke="#222" stroke-width="1.200"/>
<circle cx="1195" cy="521.500" r="5" fill="#fff" stroke="#222" stroke-width="1.200"/>
<circle cx="1264" cy="521.500" r="5" fill="#fff" stroke="#222" stroke-width="1.200"/>
<text x="534" y="532" font-size="13" fill="#333" letter-spacing=".11">reinforced concrete beam C 30/37</text>
<text x="902" y="514.500" font-size="13" fill="#333" letter-spacing=".2">PO 200/20/40/80</text>
<rect x="595.5" y="537.500" width="16" height="25" fill="#e0dede" stroke="#cc3838" stroke-width="1.400"/>
<path d="M595.5 546h16M595.5 554h16" stroke="#cc3838" stroke-width="1.400"/>
<path d="M595.5 538.500h16" stroke="#d04040" stroke-dasharray="1 1"/>
<rect x="975.5" y="537.500" width="16" height="25" fill="#e0dede" stroke="#cc3838" stroke-width="1.400"/>
<path d="M975.5 546h16M975.5 554h16" stroke="#cc3838" stroke-width="1.400"/>
<path d="M975.5 538.500h16" stroke="#d04040" stroke-dasharray="1 1"/>
<rect x="1461" y="537.500" width="16" height="25" fill="#e0dede" stroke="#cc3838" stroke-width="1.400"/>
<path d="M1461 546h16M1461 554h16" stroke="#cc3838" stroke-width="1.400"/>
<path d="M1461 538.500h16" stroke="#d04040" stroke-dasharray="1 1"/>
<path d="M533.5 462.500h44q2 0 2 2v12q0 2-2 2h-2.5l-3 4l-3-4h-35.5q-2 0-2-2v-12q0-2 2-2z" fill="#fdf6a8" stroke="#3c3c3c" stroke-width="1"/>
<text x="536" y="475" font-size="11" fill="#222">Cnt le</text>
<path d="M913.5 462.500h44q2 0 2 2v12q0 2-2 2h-3.5l-3 4l-3-4h-34.5q-2 0-2-2v-12q0-2 2-2z" fill="#fdf6a8" stroke="#3c3c3c" stroke-width="1"/>
<text x="916" y="475" font-size="11" fill="#222">Span 1</text>
<path d="M1412.5 462.500h44q2 0 2 2v12q0 2-2 2h-2.5l-3 4l-3-4h-35.5q-2 0-2-2v-12q0-2 2-2z" fill="#fdf6a8" stroke="#3c3c3c" stroke-width="1"/>
<text x="1415" y="475" font-size="11" fill="#222">Span 2</text>
<path d="M437.500 579q.5 3.500 4 3.500h506l4 4l4-4h506q3.500 0 4-3.500" fill="none" stroke="#7a7aa8" stroke-width="1"/>
<text x="951.500" y="597" font-size="11.800" text-anchor="middle" fill="#222" letter-spacing=".05">Joint 1 (total beam length - rough)</text>
<path d="M434 627.500H1470" stroke="#909090"/>
<path d="M603.5 603v28M672.5 603v28M707.5 603v28M983.5 603v28M1121.5 603v28M1131.5 603v28M1190.5 603v28M1200.5 603v28M1259.5 603v28M1269.5 603v28" stroke="#909090" fill="none"/>
<path d="M437.500 603v100M1466.500 603v100" stroke="#909090"/>
<path d="M434.7 630.300l5.600-5.600M600.7 630.300l5.600-5.600M669.7 630.300l5.600-5.600M704.7 630.300l5.600-5.600M980.7 630.300l5.600-5.600M1118.7 630.300l5.600-5.600M1128.7 630.300l5.600-5.600M1187.7 630.300l5.600-5.600M1197.7 630.300l5.600-5.600M1256.7 630.300l5.600-5.600M1266.7 630.300l5.600-5.600M1463.7 630.300l5.600-5.600" stroke="#909090" fill="none"/>
<text x="520" y="625" font-size="10.700" text-anchor="middle" fill="#aaa">2,40</text>
<text x="638" y="625" font-size="10.700" text-anchor="middle" fill="#aaa">1,00</text>
<text x="690" y="625" font-size="10.700" text-anchor="middle" fill="#aaa">50</text>
<text x="845" y="625" font-size="10.700" text-anchor="middle" fill="#aaa">4,00</text>
<text x="1051" y="625" font-size="10.700" text-anchor="middle" fill="#aaa">2,00</text>
<text x="1126.5" y="625" font-size="10.700" text-anchor="middle" fill="#aaa">15</text>
<text x="1160.5" y="625" font-size="10.700" text-anchor="middle" fill="#aaa">85</text>
<text x="1195.5" y="625" font-size="10.700" text-anchor="middle" fill="#aaa">15</text>
<text x="1229.5" y="625" font-size="10.700" text-anchor="middle" fill="#aaa">85</text>
<text x="1264.5" y="625" font-size="10.700" text-anchor="middle" fill="#aaa">15</text>
<text x="1367.5" y="625" font-size="10.700" text-anchor="middle" fill="#aaa">2,85</text>
<path d="M434 651.500H1470" stroke="#6868b0"/>
<path d="M437.500 628v24M603.500 628v24M983.500 628v24M1466.500 628v24" stroke="#6868b0"/>
<path d="M434.7 654.300l5.600-5.600M600.7 654.300l5.600-5.600M980.7 654.300l5.600-5.600M1463.7 654.300l5.600-5.600" stroke="#6868b0" fill="none"/>
<text x="520" y="649" font-size="10.700" text-anchor="middle" fill="#222">2,40</text>
<text x="792" y="649" font-size="10.700" text-anchor="middle" fill="#222">5,50</text>
<text x="1224" y="649" font-size="10.700" text-anchor="middle" fill="#222">7,00</text>
<path d="M434 675.500H1481" stroke="#909090"/>
<path d="M595.5 652v27M611.5 652v27M975.5 652v27M991.5 652v27M1460.5 652v27" stroke="#909090" fill="none"/>
<path d="M1477.500 652v27" stroke="#6868b0"/>
<path d="M434.7 678.300l5.600-5.600M592.7 678.300l5.600-5.600M608.7 678.300l5.600-5.600M972.7 678.300l5.600-5.600M988.7 678.300l5.600-5.600M1457.7 678.300l5.600-5.600" stroke="#909090" fill="none"/>
<path d="M1474.700 678.300l5.600-5.600" stroke="#6868b0" fill="none"/>
<text x="516" y="673" font-size="10.700" text-anchor="middle" fill="#aaa">2,28</text>
<text x="603.5" y="673" font-size="10.700" text-anchor="middle" fill="#222">24</text>
<text x="792" y="673" font-size="10.700" text-anchor="middle" fill="#aaa">5,26</text>
<text x="983.5" y="673" font-size="10.700" text-anchor="middle" fill="#222">24</text>
<text x="1225" y="673" font-size="10.700" text-anchor="middle" fill="#aaa">6,80</text>
<text x="1469" y="673" font-size="10.700" text-anchor="middle" fill="#222">24</text>
<path d="M434 699.500H1470" stroke="#909090"/>
<path d="M434.7 702.300l5.600-5.600M1463.7 702.300l5.600-5.600" stroke="#909090" fill="none"/>
<text x="951.500" y="697" font-size="10.700" text-anchor="middle" fill="#aaa">14,90</text>
<path d="M399 783H434" stroke="#1414f0" stroke-width="1.800"/><path d="M447.500 783l-16-4.500v9z" fill="#1414f0"/>
<path d="M399 783V816" stroke="#1414f0" stroke-width="1.800"/><path d="M399 830.500l-4.500-16h9z" fill="#1414f0"/>
<circle cx="399" cy="783" r="2.800" fill="#d01020"/>
<text x="449.500" y="788.500" font-size="15.500" fill="#333">X</text><text x="393.500" y="844.500" font-size="15.500" fill="#333">Z</text>
<g transform="translate(414 510)"><circle cx="0" cy="0" r="5.500" fill="#5a66ba"/><path d="M-5.500 0h11" stroke="#fff" stroke-width="2.400"/><rect x="1.300" y="0" width="5" height="6.500" fill="#fff"/><text x="1.800" y="7.700" font-size="8.500" font-weight="bold" fill="#222">K</text></g>
<g transform="translate(1501 489.8)"><circle cx="0" cy="0" r="5.500" fill="#5a66ba"/><path d="M-5.500 0h11M0 -5.500v11" stroke="#fff" stroke-width="2.800"/><rect x="1.300" y="0" width="5" height="6.500" fill="#fff"/><text x="1.800" y="7.700" font-size="8.500" font-weight="bold" fill="#222">F</text></g>
<g transform="translate(1521 489.8)"><circle cx="0" cy="0" r="5.500" fill="#5a66ba"/><path d="M-5.500 0h11" stroke="#fff" stroke-width="2.400"/><rect x="1.300" y="0" width="5" height="6.500" fill="#fff"/><text x="1.800" y="7.700" font-size="8.500" font-weight="bold" fill="#222">F</text></g>
<g transform="translate(1501 509.8)"><circle cx="0" cy="0" r="5.500" fill="#5a66ba"/><path d="M-5.500 0h11M0 -5.500v11" stroke="#fff" stroke-width="2.800"/><rect x="1.300" y="0" width="5" height="6.500" fill="#fff"/><text x="1.800" y="7.700" font-size="8.500" font-weight="bold" fill="#222">K</text></g>
</svg>
<div class="abs" style="left:331px;top:854px;width:1269px;height:24px;background:#bccde6"></div>
<div class="abs" style="left:337px;top:857px;width:123px;height:21px;background:#f3f7fc;border-radius:4px 4px 0 0"></div>
<div class="abs" style="left:0;top:878px;width:1600px;height:22px;background:#f2f1ef;border-top:1px solid #c4c4c4"></div>
<svg width="16" height="14" style="left:342px;top:859.500px;opacity:1"><rect x=".5" y=".5" width="14" height="12" fill="#fdfdff" stroke="#8fa6d8"/><rect x="1" y="1" width="13" height="2.500" fill="#9db6ea"/><path d="M1 6.500h13M1 9.500h13M5 3.500v9M9.500 3.500v9" stroke="#a8b4d8" stroke-width="1"/><path d="M14.500 1v12M1 12.500h14" stroke="#4a62a8" stroke-width="1"/></svg>
<div class="abs" style="left:366px;top:861px;font-size:11px;color:#1a1a2a;white-space:nowrap;letter-spacing:-0.1px">Spans/Segments</div>
<svg width="16" height="14" style="left:472.5px;top:859.500px;opacity:.85"><rect x=".5" y=".5" width="14" height="12" fill="#fdfdff" stroke="#8fa6d8"/><rect x="1" y="1" width="13" height="2.500" fill="#9db6ea"/><path d="M1 6.500h13M1 9.500h13M5 3.500v9M9.500 3.500v9" stroke="#a8b4d8" stroke-width="1"/><path d="M14.500 1v12M1 12.500h14" stroke="#4a62a8" stroke-width="1"/></svg>
<div class="abs" style="left:496px;top:861px;font-size:11px;color:#1a1a2a;white-space:nowrap;letter-spacing:-0.1px">Supports</div>
<svg width="16" height="14" style="left:561px;top:859.500px;opacity:.85"><rect x=".5" y=".5" width="14" height="12" fill="#fdfdff" stroke="#8fa6d8"/><rect x="1" y="1" width="13" height="2.500" fill="#9db6ea"/><path d="M1 6.500h13M1 9.500h13M5 3.500v9M9.500 3.500v9" stroke="#a8b4d8" stroke-width="1"/><path d="M14.500 1v12M1 12.500h14" stroke="#4a62a8" stroke-width="1"/></svg>
<div class="abs" style="left:585px;top:861px;font-size:11px;color:#1a1a2a;white-space:nowrap;letter-spacing:-0.1px">Joints</div>
<svg width="16" height="14" style="left:634.5px;top:859.500px;opacity:.85"><rect x=".5" y=".5" width="14" height="12" fill="#fdfdff" stroke="#8fa6d8"/><rect x="1" y="1" width="13" height="2.500" fill="#9db6ea"/><path d="M1 6.500h13M1 9.500h13M5 3.500v9M9.500 3.500v9" stroke="#a8b4d8" stroke-width="1"/><path d="M14.500 1v12M1 12.500h14" stroke="#4a62a8" stroke-width="1"/></svg>
<div class="abs" style="left:658px;top:861px;font-size:11px;color:#1a1a2a;white-space:nowrap;letter-spacing:-0.1px">Cross-sections</div>
<svg width="16" height="14" style="left:753.5px;top:859.500px;opacity:.85"><rect x=".5" y=".5" width="14" height="12" fill="#fdfdff" stroke="#8fa6d8"/><rect x="1" y="1" width="13" height="2.500" fill="#9db6ea"/><path d="M1 6.500h13M1 9.500h13M5 3.500v9M9.500 3.500v9" stroke="#a8b4d8" stroke-width="1"/><path d="M14.500 1v12M1 12.500h14" stroke="#4a62a8" stroke-width="1"/></svg>
<div class="abs" style="left:777px;top:861px;font-size:11px;color:#1a1a2a;white-space:nowrap;letter-spacing:-0.1px">Bonded joints</div>
<svg width="16" height="14" style="left:865.5px;top:859.500px;opacity:.85"><rect x=".5" y=".5" width="14" height="12" fill="#fdfdff" stroke="#8fa6d8"/><rect x="1" y="1" width="13" height="2.500" fill="#9db6ea"/><path d="M1 6.500h13M1 9.500h13M5 3.500v9M9.500 3.500v9" stroke="#a8b4d8" stroke-width="1"/><path d="M14.500 1v12M1 12.500h14" stroke="#4a62a8" stroke-width="1"/></svg>
<div class="abs" style="left:889px;top:861px;font-size:11px;color:#1a1a2a;white-space:nowrap;letter-spacing:-0.1px">Holes</div>
<svg width="16" height="14" style="left:938.5px;top:859.500px;opacity:.85"><rect x=".5" y=".5" width="14" height="12" fill="#fdfdff" stroke="#8fa6d8"/><rect x="1" y="1" width="13" height="2.500" fill="#9db6ea"/><path d="M1 6.500h13M1 9.500h13M5 3.500v9M9.500 3.500v9" stroke="#a8b4d8" stroke-width="1"/><path d="M14.500 1v12M1 12.500h14" stroke="#4a62a8" stroke-width="1"/></svg>
<div class="abs" style="left:962px;top:861px;font-size:11px;color:#1a1a2a;white-space:nowrap;letter-spacing:-0.1px">Sections</div>
<svg width="16" height="14" style="left:1025.5px;top:859.500px;opacity:.85"><rect x=".5" y=".5" width="14" height="12" fill="#fdfdff" stroke="#8fa6d8"/><rect x="1" y="1" width="13" height="2.500" fill="#9db6ea"/><path d="M1 6.500h13M1 9.500h13M5 3.500v9M9.500 3.500v9" stroke="#a8b4d8" stroke-width="1"/><path d="M14.500 1v12M1 12.500h14" stroke="#4a62a8" stroke-width="1"/></svg>
<div class="abs" style="left:1049px;top:861px;font-size:11px;color:#1a1a2a;white-space:nowrap;letter-spacing:-0.1px">Loads</div>
<svg width="10" height="10" style="left:1587px;top:861px" stroke="#111" stroke-width="1.500"><path d="M1 1l7.500 7.500M8.500 1l-7.500 7.500"/></svg>
</body></html>
